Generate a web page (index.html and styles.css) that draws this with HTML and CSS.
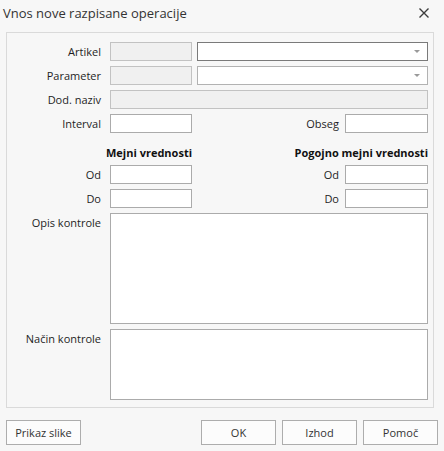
FILE: index.html
```html
<!DOCTYPE html>
<html lang="sl">
<head>
  <meta charset="UTF-8" />
  <meta name="viewport" content="width=device-width, initial-scale=1" />
  <title>Vnos nove razpisane operacije</title>
  <link rel="stylesheet" href="styles.css">
</head>
<body>
  <div class="dialog">
    <div class="title-bar">
      <div class="title">Vnos nove razpisane operacije</div>
      <div class="close-btn">
        <svg width="10" height="10" viewBox="0 0 10 10">
          <path d="M0.5 0.5 L9.5 9.5 M9.5 0.5 L0.5 9.5" stroke="#3c3c3c" stroke-width="1.4" fill="none" />
        </svg>
      </div>
    </div>

    <div class="panel">
      <div class="row">
        <div class="label">Artikel</div>
        <div class="field field-short field-disabled"></div>
        <div class="combo combo-focus"><span class="arrow"></span></div>
      </div>
      <div class="row">
        <div class="label">Parameter</div>
        <div class="field field-short field-disabled"></div>
        <div class="combo"><span class="arrow"></span></div>
      </div>
      <div class="row">
        <div class="label">Dod. naziv</div>
        <div class="field field-wide field-disabled"></div>
      </div>
      <div class="row">
        <div class="label">Interval</div>
        <div class="field field-short"></div>
        <div class="label label-right">Obseg</div>
        <div class="field field-right"></div>
      </div>

      <div class="limits-head">
        <div class="head head-left">Mejni vrednosti</div>
        <div class="head head-right">Pogojno mejni vrednosti</div>
      </div>
      <div class="row">
        <div class="label">Od</div>
        <div class="field field-short"></div>
        <div class="label label-right">Od</div>
        <div class="field field-right"></div>
      </div>
      <div class="row">
        <div class="label">Do</div>
        <div class="field field-short"></div>
        <div class="label label-right">Do</div>
        <div class="field field-right"></div>
      </div>

      <div class="row row-area">
        <div class="label">Opis kontrole</div>
        <div class="area area-big"></div>
      </div>
      <div class="row row-area">
        <div class="label">Način kontrole</div>
        <div class="area area-small"></div>
      </div>
    </div>

    <div class="buttons">
      <div class="btn">Prikaz slike</div>
      <div class="btn-group">
        <div class="btn">OK</div>
        <div class="btn">Izhod</div>
        <div class="btn">Pomoč</div>
      </div>
    </div>
  </div>
</body>
</html>
```

FILE: styles.css
```css
* {
  box-sizing: border-box;
  margin: 0;
  padding: 0;
}

body {
  font-family: "Open Sans", "Noto Sans", sans-serif;
  font-size: 11px;
  color: #1e1e1e;
  background: #f7f7f7;
  width: 444px;
  height: 451px;
  overflow: hidden;
}

.dialog {
  display: flex;
  flex-direction: column;
  height: 100%;
}

.title-bar {
  height: 32px;
  display: flex;
  align-items: flex-start;
  justify-content: space-between;
  padding: 3px 15px 0 3px;
}

.title {
  font-size: 13px;
  color: #333;
  line-height: 20px;
}

.close-btn {
  padding-top: 5px;
  display: flex;
}

.panel {
  margin: 0 10px 0 6px;
  height: 376px;
  border: 1px solid #dadada;
  padding: 9px 5px 0 0;
  display: flex;
  flex-direction: column;
  gap: 5px;
}

.row {
  display: flex;
  align-items: center;
  height: 19px;
}

.label {
  width: 94px;
  text-align: right;
  margin-right: 9px;
  flex-shrink: 0;
  white-space: nowrap;
}

.label-right {
  width: auto;
  margin-left: auto;
  margin-right: 6px;
}

.field {
  height: 19px;
  border: 1px solid #ababab;
  background: #fff;
}

.field-short {
  width: 82px;
}

.field-right {
  width: 83px;
}

.field-wide {
  width: 319px;
}

.field-disabled {
  background: #f0f0f0;
  border-color: #c2c2c2;
}

.combo {
  position: relative;
  height: 19px;
  width: 232px;
  margin-left: 5px;
  border: 1px solid #b2b2b2;
  background: #fff;
}

.combo-focus {
  border-color: #7a7a7a;
}

.arrow {
  position: absolute;
  right: 7px;
  top: 7px;
  width: 0;
  height: 0;
  border-left: 3px solid transparent;
  border-right: 3px solid transparent;
  border-top: 3px solid #9a9a9a;
}

.limits-head {
  display: flex;
  height: 22px;
  align-items: flex-end;
  padding-left: 97px;
  font-weight: 700;
  color: #111;
}

.head-left {
  width: 90px;
  text-align: center;
}

.head-right {
  margin-left: auto;
}

.row-area {
  align-items: flex-start;
  height: auto;
}

.row-area .label {
  padding-top: 2px;
}

.area {
  width: 319px;
  border: 1px solid #ababab;
  background: #fff;
}

.area-big {
  height: 111px;
}

.area-small {
  height: 71px;
}

.buttons {
  display: flex;
  justify-content: space-between;
  padding: 12px 6px 0 6px;
}

.btn-group {
  display: flex;
  gap: 6px;
}

.btn {
  width: 75px;
  height: 25px;
  border: 1px solid #adadad;
  background: #fcfcfc;
  color: #333;
  display: flex;
  align-items: center;
  justify-content: center;
}
```
